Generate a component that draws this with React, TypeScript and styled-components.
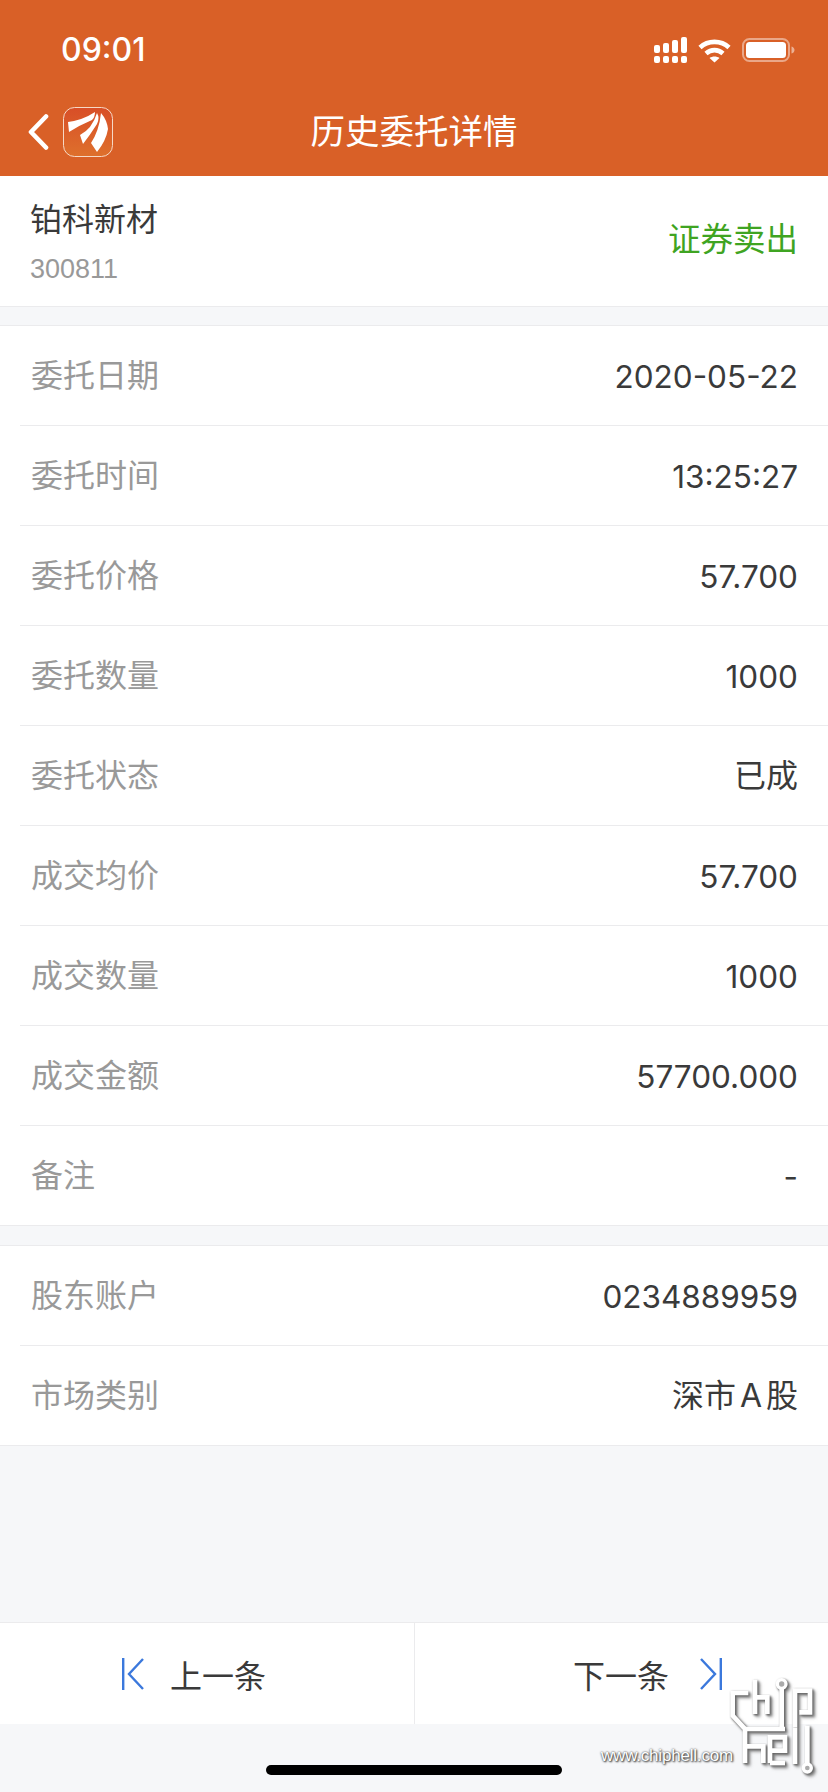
import styled, { createGlobalStyle } from 'styled-components';

const COLORS = {
  brand: '#D96027',
  page: '#F6F7F9',
  line: '#EBEBED',
  text: '#3a3a3a',
  muted: '#999999',
  green: '#3FA422',
  blue: '#3B78DC',
};

const GlobalStyle = createGlobalStyle`
  html, body {
    margin: 0;
    padding: 0;
    background: ${COLORS.page};
    font-family: Inter, "Noto Sans CJK SC", sans-serif;
    color: ${COLORS.text};
  }
`;

const Page = styled.div`
  position: relative;
  width: 828px;
  height: 1792px;
  overflow: hidden;
  display: flex;
  flex-direction: column;
`;

const Header = styled.header`
  height: 176px;
  flex-shrink: 0;
  background: ${COLORS.brand};
  color: #fff;
`;

const StatusBar = styled.div`
  height: 100px;
  padding: 0 33px 0 61px;
  box-sizing: border-box;
  display: flex;
  align-items: center;
  justify-content: space-between;
`;

const Time = styled.span`
  font-size: 32px;
  font-weight: 500;
  line-height: 1;
`;

const StatusIcons = styled.div`
  display: flex;
  align-items: center;
  gap: 11px;
`;

const NavBar = styled.div`
  position: relative;
  height: 76px;
  padding-left: 28px;
  display: flex;
  align-items: flex-start;
  gap: 14px;
`;

const Title = styled.h1`
  position: absolute;
  left: 0;
  right: 0;
  top: 8px;
  margin: 0;
  text-align: center;
  font-size: 34.5px;
  font-weight: 400;
  line-height: 48px;
`;

const StockRow = styled.section`
  height: 131px;
  flex-shrink: 0;
  box-sizing: border-box;
  padding: 0 30px;
  background: #fff;
  border-bottom: 1px solid ${COLORS.line};
  display: flex;
  align-items: center;
  justify-content: space-between;
`;

const StockInfo = styled.div`
  display: flex;
  flex-direction: column;
  gap: 11px;
`;

const StockName = styled.span`
  font-size: 32px;
  line-height: 44px;
`;

const StockCode = styled.span`
  font-family: "Liberation Sans", sans-serif;
  font-size: 27px;
  line-height: 32px;
  color: ${COLORS.muted};
`;

const TradeType = styled.span`
  font-size: 32.5px;
  line-height: 44px;
  color: ${COLORS.green};
  margin-bottom: 2px;
`;

const Group = styled.section<{ $gap: number }>`
  margin-top: ${({ $gap }) => $gap}px;
  flex-shrink: 0;
  background: #fff;
  border-top: 1px solid ${COLORS.line};
  border-bottom: 1px solid ${COLORS.line};
  padding-left: 20px;
`;

const Row = styled.div`
  height: 100px;
  box-sizing: border-box;
  padding: 0 30px 0 11px;
  display: flex;
  align-items: center;
  justify-content: space-between;
  border-bottom: 1px solid ${COLORS.line};

  &:last-child {
    height: 99px;
    border-bottom: none;
  }
`;

const Label = styled.span`
  font-size: 32px;
  line-height: 44px;
  color: ${COLORS.muted};
`;

const Value = styled.span<{ $cjk?: boolean }>`
  font-size: ${({ $cjk }) => ($cjk ? '32px' : '31.5px')};
  word-spacing: -5px;
  line-height: 44px;
  padding-top: ${({ $cjk }) => ($cjk ? '0' : '2px')};
  color: ${COLORS.text};
`;

const Spacer = styled.div`
  flex: 1;
`;

const Pager = styled.nav`
  height: 102px;
  flex-shrink: 0;
  margin-bottom: 68px;
  background: #fff;
  border-top: 1px solid ${COLORS.line};
  box-sizing: border-box;
  display: flex;
`;

const PagerButton = styled.button<{ $next?: boolean }>`
  flex: 0 0 50%;
  height: 100%;
  border: none;
  background: none;
  font: inherit;
  font-size: 32px;
  color: ${COLORS.text};
  display: flex;
  align-items: center;
  gap: ${({ $next }) => ($next ? '31px' : '26px')};
  box-sizing: border-box;
  padding: ${({ $next }) => ($next ? '0 106px 0 0' : '0 0 0 122px')};
  justify-content: ${({ $next }) => ($next ? 'flex-end' : 'flex-start')};
  border-left: ${({ $next }) => ($next ? `1px solid ${COLORS.line}` : 'none')};
`;

const HomeIndicator = styled.div`
  position: absolute;
  left: 266px;
  top: 1765px;
  width: 296px;
  height: 10px;
  border-radius: 5px;
  background: #000;
`;

const WatermarkLogo = styled.svg`
  position: absolute;
  left: 720px;
  top: 1669px;
  filter: drop-shadow(1px 1px 1px rgba(90, 90, 90, 0.95)) drop-shadow(2px 2px 1px rgba(130, 130, 130, 0.85));
`;

const WatermarkText = styled.span`
  position: absolute;
  left: 601px;
  top: 1745px;
  font-family: "Liberation Sans", sans-serif;
  font-size: 17px;
  line-height: 22px;
  letter-spacing: -0.2px;
  color: #fff;
  text-shadow: 0 0 2px #333, 1px 1px 2px #333;
`;

const ROWS_MAIN = [
  { label: '委托日期', value: '2020-05-22' },
  { label: '委托时间', value: '13:25:27' },
  { label: '委托价格', value: '57.700' },
  { label: '委托数量', value: '1000' },
  { label: '委托状态', value: '已成', cjk: true },
  { label: '成交均价', value: '57.700' },
  { label: '成交数量', value: '1000' },
  { label: '成交金额', value: '57700.000' },
  { label: '备注', value: '-' },
];

const ROWS_ACCOUNT = [
  { label: '股东账户', value: '0234889959' },
  { label: '市场类别', value: '深市 A 股', cjk: true },
];

function SignalIcon() {
  const cols = [
    [0, 8],
    [9, 6],
    [18, 3],
    [27, 0],
  ];
  return (
    <svg width="33" height="26" viewBox="0 0 33 26" fill="#fff">
      {cols.map(([x, top]) => (
        <g key={x}>
          <rect x={x} y={top} width="6" height={16 - top} rx="2" />
          <rect x={x} y="19" width="6" height="7" rx="2" />
        </g>
      ))}
    </svg>
  );
}

function WifiIcon() {
  return (
    <svg width="33" height="25" viewBox="0 0 33 25" fill="none" stroke="#fff" strokeWidth="4.6">
      <path d="M2 9.5C10 2 23 2 31 9.5" />
      <path d="M8 15.5C13 11 20 11 25 15.5" />
      <path d="M16.5 24.5L11.5 20C14.5 18 18.5 18 21.5 20Z" fill="#fff" stroke="none" />
    </svg>
  );
}

function BatteryIcon() {
  return (
    <svg width="53" height="24" viewBox="0 0 53 24">
      <rect x="1" y="1" width="46" height="22" rx="6.5" fill="none" stroke="#fff" strokeOpacity="0.45" strokeWidth="2" />
      <rect x="4" y="4" width="40" height="16" rx="3.5" fill="#fff" />
      <path d="M49.5 8.5C51.5 9 52.5 10.5 52.5 12S51.5 15 49.5 15.5Z" fill="#fff" fillOpacity="0.5" />
    </svg>
  );
}

function BackIcon() {
  return (
    <svg width="21" height="36" viewBox="0 0 21 36" fill="none" stroke="#fff" strokeWidth="4.6" strokeLinecap="round" strokeLinejoin="round" style={{ marginTop: 14 }}>
      <path d="M18 2.5L3 18L18 33.5" />
    </svg>
  );
}

function AppLogo() {
  return (
    <svg width="50" height="50" viewBox="0 0 50 50" style={{ marginTop: 7 }}>
      <defs>
        <linearGradient id="logoBg" x1="0" y1="0" x2="0" y2="1">
          <stop offset="0" stopColor="#D84E27" />
          <stop offset="1" stopColor="#DE702C" />
        </linearGradient>
      </defs>
      <rect x="0.5" y="0.5" width="49" height="49" rx="11" fill="url(#logoBg)" stroke="#F6D9C6" />
      <path d="M5 15Q20 13 32 5Q32 10 29 13Q17 18 6 25Z" fill="#fff" />
      <path d="M17 28Q29 22 34 6Q37 11 34 17Q27 28 20 37Z" fill="#fff" />
      <path d="M28 36Q36 24 38 6Q44 13 45 22Q43 34 34 45Z" fill="#fff" />
    </svg>
  );
}

function PagerIcon({ next }: { next?: boolean }) {
  return (
    <svg width="22" height="32" viewBox="0 0 22 32" fill="none" stroke={COLORS.blue} strokeWidth="2.4" style={{ transform: next ? 'scaleX(-1)' : undefined }}>
      <path d="M1.2 0V32" />
      <path d="M21 1L7 16L21 31" />
    </svg>
  );
}

function Watermark() {
  return (
    <>
      <WatermarkText>www.chiphell.com</WatermarkText>
      <WatermarkLogo width="108" height="122" viewBox="0 0 324 366" fill="none" stroke="#fff" strokeWidth="14">
        <path d="M85 72H38V140L75 180V282" />
        <path d="M105 32V135M105 85H142V135" />
        <path d="M75 180H195" />
        <path d="M185 60V178" />
        <circle cx="185" cy="45" r="13" fill="#aaa" strokeWidth="10" />
        <path d="M225 175V65H270V130H238" />
        <path d="M75 232H130V282" />
        <path d="M150 282V205H195V245H155" />
        <path d="M150 282H195" />
        <path d="M225 175V285" />
        <path d="M262 170V285" />
        <circle cx="262" cy="297" r="12" fill="#aaa" strokeWidth="10" />
      </WatermarkLogo>
    </>
  );
}

export default function App() {
  return (
    <Page>
      <GlobalStyle />
      <Header>
        <StatusBar>
          <Time>09:01</Time>
          <StatusIcons>
            <SignalIcon />
            <WifiIcon />
            <BatteryIcon />
          </StatusIcons>
        </StatusBar>
        <NavBar>
          <BackIcon />
          <AppLogo />
          <Title>历史委托详情</Title>
        </NavBar>
      </Header>
      <StockRow>
        <StockInfo>
          <StockName>铂科新材</StockName>
          <StockCode>300811</StockCode>
        </StockInfo>
        <TradeType>证券卖出</TradeType>
      </StockRow>
      <Group $gap={18}>
        {ROWS_MAIN.map(({ label, value, cjk }) => (
          <Row key={label}>
            <Label>{label}</Label>
            <Value $cjk={cjk}>{value}</Value>
          </Row>
        ))}
      </Group>
      <Group $gap={19}>
        {ROWS_ACCOUNT.map(({ label, value, cjk }) => (
          <Row key={label}>
            <Label>{label}</Label>
            <Value $cjk={cjk}>{value}</Value>
          </Row>
        ))}
      </Group>
      <Spacer />
      <Pager>
        <PagerButton>
          <PagerIcon />
          上一条
        </PagerButton>
        <PagerButton $next>
          下一条
          <PagerIcon next />
        </PagerButton>
      </Pager>
      <HomeIndicator />
      <Watermark />
    </Page>
  );
}
